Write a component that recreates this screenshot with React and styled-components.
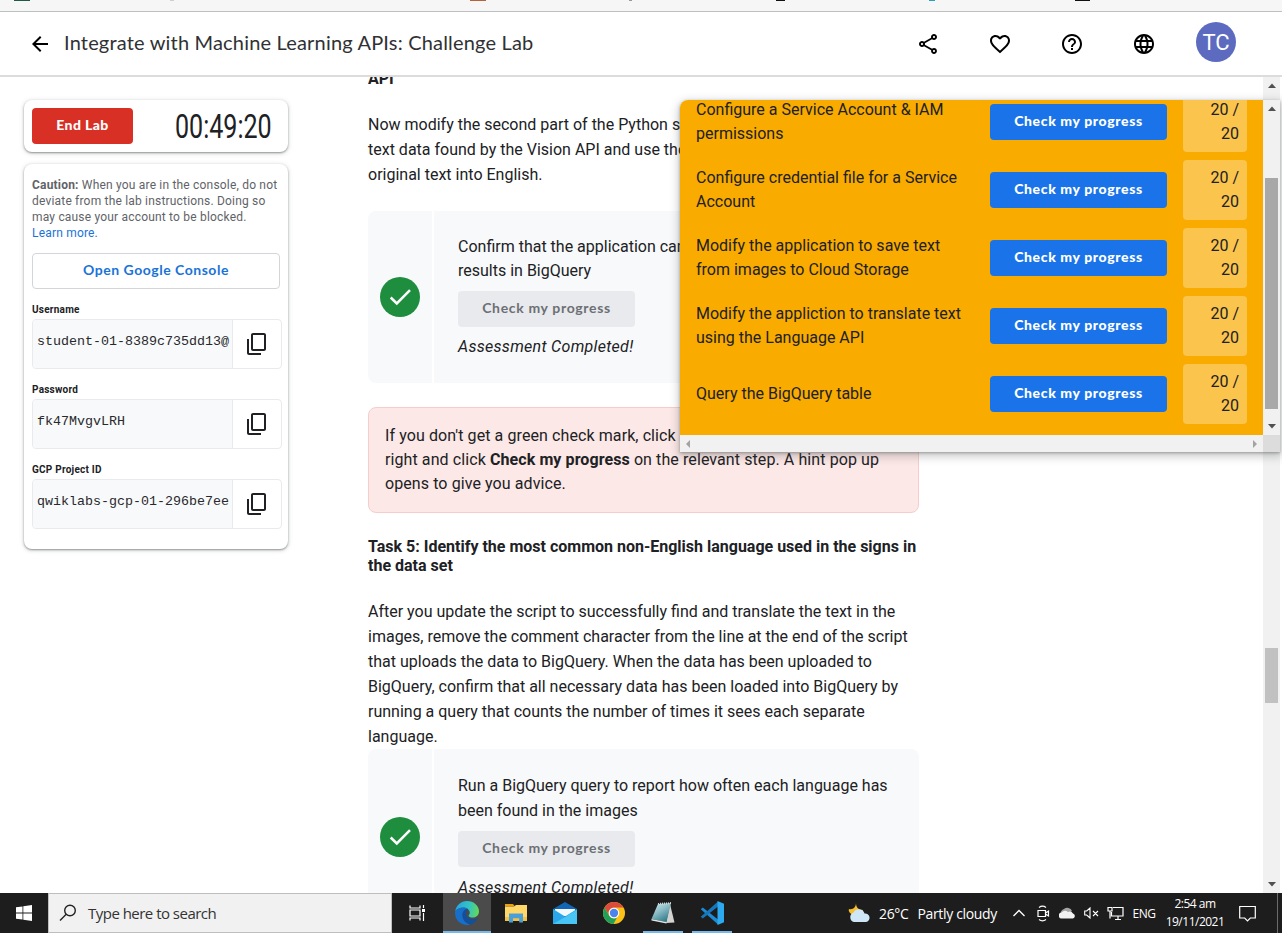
import React from "react";
import styled, { createGlobalStyle, css } from "styled-components";
import {
  MdArrowBack,
  MdOutlineShare,
  MdFavoriteBorder,
  MdHelpOutline,
  MdLanguage,
  MdOutlineContentCopy,
} from "react-icons/md";

const GlobalStyle = createGlobalStyle`
  *, *::before, *::after { box-sizing: border-box; }
  body {
    margin: 0;
    background: #fff;
    color: #202124;
    font-family: Roboto, "Liberation Sans", sans-serif;
    font-size: 16px;
    overflow: hidden;
  }
  p, h1, h2 { margin: 0; }
`;

const brand = css`
  font-family: Lato, "Open Sans", sans-serif;
`;

const Screen = styled.div`
  position: relative;
  width: 1282px;
  height: 933px;
  display: flex;
  flex-direction: column;
  overflow: hidden;
`;

const BookmarksBar = styled.div`
  position: relative;
  flex: none;
  height: 12px;
  background: #f6f6f6;
  border-bottom: 1px solid #bcc0c0;
`;

const Bookmark = styled.i`
  position: absolute;
  top: 0;
  left: ${(p) => p.$x}px;
  width: ${(p) => p.$w}px;
  height: 1px;
  background: ${(p) => p.$color};
`;

const Header = styled.header`
  flex: none;
  height: 65px;
  display: flex;
  align-items: center;
  padding: 0 46px 0 28px;
  border-bottom: 2px solid #dcdcdd;
  background: #fff;
  color: #000;
`;

const Title = styled.h1`
  ${brand}
  flex: 1;
  margin-left: 12px;
  padding-bottom: 3px;
  font-size: 20px;
  font-weight: 400;
  line-height: 24px;
  letter-spacing: 0.18px;
  color: #303134;
  white-space: nowrap;
`;

const HeaderActions = styled.nav`
  display: flex;
  align-items: center;
  gap: 48px;
`;

const Avatar = styled.div`
  width: 40px;
  height: 40px;
  margin: -4px 0 0 -8px;
  border-radius: 50%;
  background: #5c6bc0;
  color: #fff;
  font-size: 22px;
  line-height: 41px;
  text-align: center;
`;

const Body = styled.div`
  flex: 1;
  min-height: 0;
  display: flex;
  overflow: hidden;
`;

const Sidebar = styled.aside`
  flex: none;
  width: 368px;
  padding: 23px 80px 0 24px;
  display: flex;
  flex-direction: column;
  gap: 12px;
`;

const Card = styled.section`
  border-radius: 8px;
  background: #fff;
  box-shadow: 0 1px 2px rgba(60, 64, 67, 0.5), 0 1px 4px 1px rgba(60, 64, 67, 0.15);
`;

const TimerCard = styled(Card)`
  height: 52px;
  display: flex;
  justify-content: space-between;
  align-items: center;
  padding: 0 17px 0 8px;
`;

const EndButton = styled.button`
  ${brand}
  width: 101px;
  height: 36px;
  padding: 0 0 3px;
  border: 0;
  border-radius: 4px;
  background: #d93025;
  color: #fff;
  font-size: 14px;
  font-weight: 900;
  letter-spacing: 0.4px;
`;

const Timer = styled.div`
  width: 96px;
  height: 38px;
  font-size: 33px;
  line-height: 39px;
  white-space: nowrap;
  span {
    display: inline-block;
    transform: scaleX(0.76);
    transform-origin: 0 50%;
  }
`;

const Credentials = styled(Card)`
  height: 385px;
  padding: 13px 8px 0;
`;

const Caution = styled.p`
  font-size: 12px;
  line-height: 16px;
  letter-spacing: 0.19px;
  color: #5f6368;
  white-space: nowrap;
  a { color: #1a73d8; }
`;

const ConsoleButton = styled.button`
  ${brand}
  display: block;
  width: 100%;
  height: 36px;
  margin: 12px 0 14px;
  padding: 0 0 3px;
  border: 1px solid #d3d5d9;
  border-radius: 4px;
  background: #fff;
  color: #1a73d8;
  font-size: 14px;
  font-weight: 700;
  letter-spacing: 0.52px;
`;

const Field = styled.div`
  height: 80px;
`;

const FieldLabel = styled.div`
  height: 16px;
  line-height: 14px;
  font-size: 10px;
  font-weight: 700;
  letter-spacing: 0.24px;
`;

const FieldBox = styled.div`
  display: flex;
  width: 250px;
  height: 50px;
  border: 1px solid #e8eaed;
  border-radius: 4px;
  overflow: hidden;
`;

const FieldValue = styled.div`
  width: 200px;
  padding-left: 4px;
  border-right: 1px solid #e8eaed;
  background: #f8f9fa;
  font: 13.33px/43px "Liberation Mono", monospace;
  color: #27292c;
  white-space: nowrap;
`;

const CopyButton = styled.div`
  flex: 1;
  display: grid;
  place-items: center;
  svg { transform: scaleY(-1); }
`;

const Content = styled.main`
  flex: none;
  width: 551px;
  margin-top: -8px;
`;

const Heading = styled.h2`
  font-size: 16px;
  font-weight: 700;
  line-height: 19px;
  white-space: nowrap;
`;

const Paragraph = styled.p`
  margin-top: ${(p) => p.$top}px;
  line-height: 25px;
  white-space: nowrap;
`;

const Checkpoint = styled.section`
  display: flex;
  gap: 2px;
  height: ${(p) => p.$h}px;
  margin-top: ${(p) => p.$top}px;
  border-radius: 8px;
  overflow: hidden;
  line-height: ${(p) => p.$line}px;
  white-space: nowrap;
`;

const CheckStatus = styled.div`
  width: 64px;
  display: grid;
  place-items: center;
  background: #f8f9fa;
`;

const CheckBody = styled.div`
  flex: 1;
  padding: 24px 24px 0;
  background: #f8f9fa;
  em {
    display: block;
    margin-top: 8px;
    letter-spacing: 0.3px;
  }
`;

const ProgressButton = styled.button`
  ${brand}
  display: block;
  flex: none;
  width: 177px;
  height: 36px;
  padding: 0 0 3px;
  border: 0;
  border-radius: 4px;
  background: ${(p) => (p.disabled ? "#e8eaed" : "#1a73e8")};
  color: ${(p) => (p.disabled ? "#6c6f74" : "#fff")};
  font-size: 14px;
  font-weight: ${(p) => (p.disabled ? 700 : 900)};
  letter-spacing: ${(p) => (p.disabled ? 0.66 : 0.62)}px;
  white-space: nowrap;
`;

const CheckAction = styled(ProgressButton)`
  margin-top: 8px;
`;

const Hint = styled.aside`
  height: 106px;
  margin: 24px 0;
  padding: 16px;
  border: 1px solid #f6cdca;
  border-radius: 8px;
  background: #fce8e6;
  line-height: 24px;
  letter-spacing: 0.09px;
  white-space: nowrap;
`;

const ScrollTrack = styled.div`
  width: 17px;
  height: 100%;
  flex: none;
  display: flex;
  flex-direction: column;
  align-items: center;
  justify-content: space-between;
  padding: 5px 0;
  background: #f1f1f1;
`;

const PageScroll = styled(ScrollTrack)`
  margin-left: auto;
  margin-right: 2px;
`;

const Thumb = styled.div`
  width: 13px;
  height: ${(p) => p.$h}px;
  margin-top: ${(p) => p.$top}px;
  margin-bottom: auto;
  background: ${(p) => p.$color};
`;

const Score = styled.section`
  position: absolute;
  left: 680px;
  top: 100px;
  width: 600px;
  height: 352px;
  border-radius: 8px 0 0 0;
  display: grid;
  grid-template: 335px 17px / 583px 17px;
  overflow: hidden;
  background: #f9ab00;
`;

const ScoreShadow = styled.div`
  position: absolute;
  left: 680px;
  top: 100px;
  width: 600px;
  height: 352px;
  border-radius: 8px 0 0 0;
  box-shadow: 0 1px 3px rgba(60, 64, 67, 0.4), 0 3px 9px 2px rgba(60, 64, 67, 0.25);
`;

const Steps = styled.div`
  display: flex;
  flex-direction: column;
  gap: 8px;
  margin-top: -8px;
  padding: 0 16px;
  height: 343px;
`;

const Step = styled.div`
  height: 60px;
  display: flex;
  align-items: center;
  line-height: 24px;
`;

const StepName = styled.div`
  width: 294px;
  white-space: pre-line;
`;

const Points = styled.div`
  width: 64px;
  height: 60px;
  margin-left: 16px;
  padding: 6px 8px 0 20px;
  border-radius: 4px;
  background: #fbc44d;
  text-align: right;
`;

const HorizontalTrack = styled.div`
  display: flex;
  align-items: center;
  justify-content: space-between;
  padding: 0 4px;
  background: #f1f1f1;
`;

const ScrollCorner = styled.div`
  background: #dcdcdc;
`;

const Taskbar = styled.footer`
  flex: none;
  height: 40px;
  display: flex;
  background: #1d1d1d;
  color: #fff;
  font-family: "Open Sans", "Noto Sans", sans-serif;
`;

const TaskItem = styled.div`
  flex: none;
  width: ${(p) => p.$w}px;
  height: 40px;
  display: flex;
  align-items: center;
  justify-content: center;
  background: ${(p) => (p.$active ? "#4b4b4b" : "transparent")};
  box-shadow: ${(p) => (p.$open ? "inset 0 -2px #76b9ed" : "none")};
`;

const SearchBox = styled.div`
  flex: none;
  width: 344px;
  height: 40px;
  display: flex;
  align-items: center;
  gap: 11px;
  padding-left: 10px;
  border: 1px solid #bebebe;
  background: #f1f1f1;
  color: #333;
  font-size: 15px;
  letter-spacing: -0.52px;
`;

const Tray = styled.div`
  flex: 1;
  min-width: 0;
  display: flex;
  align-items: center;
  padding-left: 116px;
  font-size: 14px;
  white-space: nowrap;
  > * { flex: none; }
`;

const Weather = styled.div`
  display: flex;
  align-items: center;
  width: 159px;
  gap: 8px;
  letter-spacing: -0.34px;
  span + span { margin-left: 1px; }
`;

const TrayIcon = styled.div`
  display: flex;
  align-items: center;
  justify-content: center;
  width: 24px;
`;

const Language = styled.div`
  width: 30px;
  margin-left: 2px;
  font-size: 12px;
  letter-spacing: -0.4px;
  text-align: center;
`;

const Clock = styled.div`
  width: 66px;
  margin-left: 3px;
  font-size: 12px;
  line-height: 18px;
  letter-spacing: -0.5px;
  text-align: center;
`;

const ActionCenter = styled.div`
  margin-left: 7px;
  width: 24px;
  display: flex;
  justify-content: center;
`;

const DesktopEdge = styled.div`
  width: 1px;
  height: 40px;
  margin-left: 18px;
  background: #6b6b6b;
`;

const arrows = {
  up: "M0 6 L4 1.5 L8 6Z",
  down: "M0 2 L4 6.5 L8 2Z",
  left: "M6 0 L2 4 L6 8Z",
  right: "M2 0 L6 4 L2 8Z",
};

const Arrow = ({ dir, color = "#505050" }) => (
  <svg width="8" height="8" viewBox="0 0 8 8">
    <path d={arrows[dir]} fill={color} />
  </svg>
);

const GreenCheck = () => (
  <svg width="40" height="40" viewBox="0 0 40 40">
    <circle cx="20" cy="20" r="20" fill="#1e8e3e" />
    <path d="M10.7 20.5 L16.8 26.5 L30 13.2" fill="none" stroke="#fff" strokeWidth="2.5" />
  </svg>
);

const WindowsLogo = () => (
  <svg width="16" height="16" viewBox="0 0 16 16" fill="#fff">
    <path d="M0 2.3 6.5 1.4V7.6H0zM7.3 1.3 16 0v7.6H7.3zM0 8.4h6.5v6.2L0 13.7zM7.3 8.4H16V16l-8.7-1.3z" />
  </svg>
);

const SearchIcon = () => (
  <svg width="18" height="18" viewBox="0 0 18 18" fill="none" stroke="#222" strokeWidth="1.4">
    <circle cx="11" cy="6.5" r="5.3" />
    <path d="M7.2 10.3 1 16.5" />
  </svg>
);

const TaskView = () => (
  <svg width="17" height="16" viewBox="0 0 17 16" fill="none" stroke="#fff" strokeWidth="1.2">
    <path d="M1 0.5V3H11V0.5M1 15.5V13H11V15.5M1 5H11V11H1ZM14.5 0V3M14.5 8V16" />
    <path d="M13 4h3v3h-3z" fill="#fff" stroke="none" />
  </svg>
);

const Edge = () => (
  <svg width="24" height="24" viewBox="0 0 24 24">
    <defs>
      <linearGradient id="edgeTop" x1="0" y1="0.4" x2="1" y2="0.5">
        <stop offset="0" stopColor="#2aa4df" />
        <stop offset="0.55" stopColor="#2fc4c8" />
        <stop offset="1" stopColor="#65d957" />
      </linearGradient>
    </defs>
    <path d="M0.2 10.5C1 4.5 6 0 12 0c7 0 12 5 12 10.3 0 4-3 6.3-6.3 6.3-2.6 0-4-.9-4-1.9 0-.8 1.1-1.2 1.1-3.1 0-2.6-2.5-4.9-6.2-4.9-4.2 0-7.4 1.8-8.4 3.8z" fill="url(#edgeTop)" />
    <path d="M0.2 10.5C1.5 8 4.5 6.6 8.3 6.6c2 0 3.6.6 4.7 1.5-3.2 0-5.5 2.9-5.5 6.2 0 4.6 3.6 8.2 7.6 9.1-1 .4-2 .6-3.1.6C5.4 24 0 18.6 0 12c0-.5.1-1 .2-1.5z" fill="#176fc9" />
    <path d="M13 8.1c-4 0-6 3.4-5.4 7.2.7 4.6 4.4 7.8 7.8 8.1 3-.8 5.6-2.9 7.1-5.5.3-.5-.2-.7-.6-.5-4.6 2.2-10.6.4-10.8-4.7 0-2 .8-3.3 1.9-4.6z" fill="#10509f" />
  </svg>
);

const Explorer = () => (
  <svg width="22" height="20" viewBox="0 0 22 20">
    <path d="M0 1h8l2 2.5H0z" fill="#e5a013" />
    <path d="M0 3.5 9 3.5 11 2H22V18H0z" fill="#ffd867" />
    <path d="M0 14h22v4H0z" fill="#f5c141" />
    <path d="M4 10.5h14V19.5h-3.8v-4.2H8v4.2H4z" fill="#4a9fd8" />
  </svg>
);

const Mail = () => (
  <svg width="24" height="22" viewBox="0 0 24 22">
    <path d="M0 7 12 0 24 7v3H0z" fill="#1267b4" />
    <path d="M2 7H22V14H2z" fill="#f3f8fc" />
    <path d="M0 7 12 14.5 24 7V22H0z" fill="#28a8ea" />
    <path d="M0 22 24 8V22z" fill="#48c5f5" />
  </svg>
);

const Chrome = () => (
  <svg width="22" height="22" viewBox="0 0 22 22">
    <circle cx="11" cy="11" r="11" fill="#fbc116" />
    <path d="M1.5 5.5A11 11 0 0 1 20.5 5.5H11A5.5 5.5 0 0 0 6.2 13.7z" fill="#dd4b3e" />
    <path d="M1.5 5.5 6.2 13.7A5.5 5.5 0 0 0 14 15.6L10.5 22A11 11 0 0 1 1.5 5.5z" fill="#20a15b" />
    <circle cx="11" cy="11" r="5.3" fill="#fff" />
    <circle cx="11" cy="11" r="4.2" fill="#4a85ee" />
  </svg>
);

const Notepad = () => (
  <svg width="24" height="22" viewBox="0 0 24 22">
    <defs>
      <linearGradient id="padSheet" x1="0" y1="0" x2="0.6" y2="1">
        <stop offset="0" stopColor="#d5edf1" />
        <stop offset="0.5" stopColor="#8bbcc6" />
        <stop offset="1" stopColor="#347d8d" />
      </linearGradient>
    </defs>
    <path d="M19 2 23.5 20.5 15 21z" fill="#d3d4cf" />
    <path d="M7 2 20 1 15.5 20 0.5 17z" fill="url(#padSheet)" />
    <path d="M7 2 20 1" stroke="#cfd7d9" strokeWidth="2" strokeDasharray="1 1" />
    <path d="M0.5 17 15.5 20v1.5L0.5 18.5z" fill="#dfe6e4" />
  </svg>
);

const VsCode = () => (
  <svg width="24" height="24" viewBox="0 0 24 24">
    <path d="M0.8 8.2 2.8 6.4 18 18.5V23.6z" fill="#1d8ad3" />
    <path d="M0.8 15.8 2.8 17.6 18 5.5V0.4z" fill="#1477bd" />
    <path d="M17.5 0 24 2.8V21.2L17.5 24z" fill="#2da9f0" />
  </svg>
);

const WeatherIcon = () => (
  <svg width="23" height="20" viewBox="0 0 23 20">
    <path d="M8 0c0 4 2 7 7 7-1 4-5 6-9 5S0 8 1 6c4 1 7-2 7-6z" fill="#f6c02c" />
    <path d="M6 19a5 5 0 0 1-.5-9.5A6 6 0 0 1 16.5 10.5 4.3 4.3 0 0 1 18 19z" fill="#cfe6f7" />
  </svg>
);

const Chevron = () => (
  <svg width="12" height="8" viewBox="0 0 12 8" fill="none" stroke="#fff" strokeWidth="1.3">
    <path d="M0.5 7 6 1.5 11.5 7" />
  </svg>
);

const MeetNow = () => (
  <svg width="13" height="17" viewBox="0 0 13 17" fill="none" stroke="#fff" strokeWidth="1.2">
    <path d="M2 2.5Q5.5-.2 9 2.5M2 14.5Q5.5 17.2 9 14.5M1 5.5h7.5v6H1zM8.5 8l3-2v5l-3-2" />
  </svg>
);

const OneDrive = () => (
  <svg width="17" height="12" viewBox="0 0 17 12">
    <path d="M2 9A5 5 0 0 1 5 2a5 5 0 0 1 8 2L5 10z" fill="#a4a4a4" />
    <path d="M3 11.5a3 3 0 0 1-.5-6A5 5 0 0 1 9 5a4 4 0 0 1 5 1.5 2.6 2.6 0 0 1 0 5z" fill="#f2f2f2" />
  </svg>
);

const Muted = () => (
  <svg width="15" height="12" viewBox="0 0 15 12" fill="none" stroke="#fff" strokeWidth="1.1">
    <path d="M0.7 4h2L6 1v10L2.7 8h-2zM9 4l5 5M14 4 9 9" />
  </svg>
);

const Network = () => (
  <svg width="17" height="15" viewBox="0 0 17 15" fill="none" stroke="#fff" strokeWidth="1.2">
    <path d="M6 1.5h10v8.5H4.5V6M8 13.5h6M11 10v3.5M1 1.5h4V5H1zM3 5v7.5" />
  </svg>
);

const ActionIcon = () => (
  <svg width="17" height="17" viewBox="0 0 17 17" fill="none" stroke="#fff" strokeWidth="1.2">
    <path d="M0.7 1.5h15.6v11.5h-5L8.5 15.8 5.7 13h-5z" />
  </svg>
);

const bookmarks = [
  [14, 16, "#1d5b45"],
  [170, 4, "#cfcfcf"],
  [470, 16, "#b8623a"],
  [629, 3, "#999"],
  [776, 9, "#111"],
  [929, 6, "#2ba0bb"],
  [1075, 15, "#111"],
];

const fields = [
  ["Username", "student-01-8389c735dd13@"],
  ["Password", "fk47MvgvLRH"],
  ["GCP Project ID", "qwiklabs-gcp-01-296be7ee"],
];

const steps = [
  "Configure a Service Account & IAM\npermissions",
  "Configure credential file for a Service\nAccount",
  "Modify the application to save text\nfrom images to Cloud Storage",
  "Modify the appliction to translate text\nusing the Language API",
  "Query the BigQuery table",
];

const apps = [
  { Icon: TaskView, w: 51 },
  { Icon: Edge, w: 48, active: true, open: true },
  { Icon: Explorer, w: 50 },
  { Icon: Mail, w: 48 },
  { Icon: Chrome, w: 50 },
];

export default function App() {
  return (
    <Screen>
      <GlobalStyle />
      <BookmarksBar>
        {bookmarks.map(([x, w, color]) => (
          <Bookmark key={x} $x={x} $w={w} $color={color} />
        ))}
      </BookmarksBar>
      <Header>
        <MdArrowBack size={24} />
        <Title>Integrate with Machine Learning APIs: Challenge Lab</Title>
        <HeaderActions>
          <MdOutlineShare size={24} />
          <MdFavoriteBorder size={24} />
          <MdHelpOutline size={24} />
          <MdLanguage size={24} />
          <Avatar>TC</Avatar>
        </HeaderActions>
      </Header>
      <Body>
        <Sidebar>
          <TimerCard>
            <EndButton>End Lab</EndButton>
            <Timer><span>00:49:20</span></Timer>
          </TimerCard>
          <Credentials>
            <Caution>
              <b>Caution:</b> When you are in the console, do not<br />
              deviate from the lab instructions. Doing so<br />
              may cause your account to be blocked.<br />
              <a>Learn more.</a>
            </Caution>
            <ConsoleButton>Open Google Console</ConsoleButton>
            {fields.map(([label, value]) => (
              <Field key={label}>
                <FieldLabel>{label}</FieldLabel>
                <FieldBox>
                  <FieldValue>{value}</FieldValue>
                  <CopyButton><MdOutlineContentCopy size={24} /></CopyButton>
                </FieldBox>
              </Field>
            ))}
          </Credentials>
        </Sidebar>
        <Content>
          <Heading>API</Heading>
          <Paragraph $top={24}>
            Now modify the second part of the Python script to<br />
            text data found by the Vision API and use the API<br />
            original text into English.
          </Paragraph>
          <Checkpoint $top={24} $h={172} $line={24}>
            <CheckStatus><GreenCheck /></CheckStatus>
            <CheckBody>
              Confirm that the application can<br />
              results in BigQuery
              <CheckAction disabled>Check my progress</CheckAction>
              <em>Assessment Completed!</em>
            </CheckBody>
          </Checkpoint>
          <Hint>
            If you don't get a green check mark, click<br />
            right and click <b>Check my progress</b> on the relevant step. A hint pop up<br />
            opens to give you advice.
          </Hint>
          <Heading>
            Task 5: Identify the most common non-English language used in the signs in<br />
            the data set
          </Heading>
          <Paragraph $top={24}>
            After you update the script to successfully find and translate the text in the<br />
            images, remove the comment character from the line at the end of the script<br />
            that uploads the data to BigQuery. When the data has been uploaded to<br />
            BigQuery, confirm that all necessary data has been loaded into BigQuery by<br />
            running a query that counts the number of times it sees each separate<br />
            language.
          </Paragraph>
          <Checkpoint $top={0} $h={176} $line={25}>
            <CheckStatus><GreenCheck /></CheckStatus>
            <CheckBody>
              Run a BigQuery query to report how often each language has<br />
              been found in the images
              <CheckAction disabled>Check my progress</CheckAction>
              <em>Assessment Completed!</em>
            </CheckBody>
          </Checkpoint>
        </Content>
        <PageScroll>
          <Arrow dir="up" />
          <Thumb $top={558} $h={55} $color="#c1c1c1" />
          <Arrow dir="down" />
        </PageScroll>
      </Body>
      <ScoreShadow />
      <Score>
        <Steps>
          {steps.map((name) => (
            <Step key={name}>
              <StepName>{name}</StepName>
              <ProgressButton>Check my progress</ProgressButton>
              <Points>20 / 20</Points>
            </Step>
          ))}
        </Steps>
        <ScrollTrack>
          <Arrow dir="up" />
          <Thumb $top={65} $h={231} $color="#a8a8a8" />
          <Arrow dir="down" />
        </ScrollTrack>
        <HorizontalTrack>
          <Arrow dir="left" color="#a3a3a3" />
          <Arrow dir="right" color="#a3a3a3" />
        </HorizontalTrack>
        <ScrollCorner />
      </Score>
      <Taskbar>
        <TaskItem $w={48}><WindowsLogo /></TaskItem>
        <SearchBox><SearchIcon />Type here to search</SearchBox>
        {apps.map(({ Icon, w, active, open }, i) => (
          <TaskItem key={i} $w={w} $active={active} $open={open}><Icon /></TaskItem>
        ))}
        <TaskItem $w={4} />
        <TaskItem $w={40} $open><Notepad /></TaskItem>
        <TaskItem $w={9} />
        <TaskItem $w={40} $open><VsCode /></TaskItem>
        <Tray>
          <Weather>
            <WeatherIcon />
            <span>26°C</span>
            <span>Partly cloudy</span>
          </Weather>
          <TrayIcon><Chevron /></TrayIcon>
          <TrayIcon><MeetNow /></TrayIcon>
          <TrayIcon><OneDrive /></TrayIcon>
          <TrayIcon><Muted /></TrayIcon>
          <TrayIcon><Network /></TrayIcon>
          <Language>ENG</Language>
          <Clock>2:54 am<br />19/11/2021</Clock>
          <ActionCenter><ActionIcon /></ActionCenter>
          <DesktopEdge />
        </Tray>
      </Taskbar>
    </Screen>
  );
}
